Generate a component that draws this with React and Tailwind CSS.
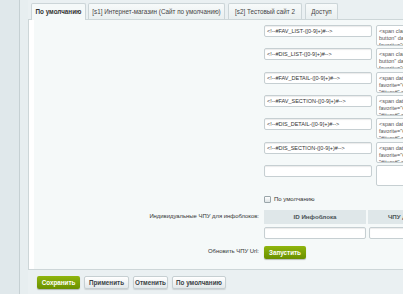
const font = "font-['Liberation_Sans',Arial,sans-serif]";

function Field({ value, wide }) {
  return (
    <div
      className={`h-[12px] ${wide ? "w-[102px]" : "w-[108px]"} shrink-0 bg-white border border-[#c6cfd2] rounded-[2px] shadow-[inset_0_1px_1px_rgba(0,0,0,0.08)] px-[2px] text-[5.5px] leading-[10px] text-[#333] whitespace-nowrap overflow-hidden`}
    >
      {value}
    </div>
  );
}

function Area({ lines }) {
  return (
    <div className="h-[21px] w-[60px] shrink-0 bg-white border border-[#c6cfd2] rounded-[2px] px-[2px] pt-[2px] text-[5.5px] leading-[7px] text-[#555] whitespace-nowrap overflow-hidden">
      {lines.map((l, i) => (
        <div key={i}>{l}</div>
      ))}
    </div>
  );
}

function Row({ label, children, className = "" }) {
  return (
    <div className={`flex items-start ${className}`}>
      <div className="w-[226px] shrink-0 text-right text-[5.9px] text-[#333] pr-[1px]">{label}</div>
      <div className="ml-[4px] flex items-start gap-[4px]">{children}</div>
    </div>
  );
}

function Btn({ children, green, w }) {
  return (
    <div
      className={`h-[13px] ${w} flex items-center justify-center rounded-[2px] text-[6.3px] font-bold ${
        green
          ? "bg-gradient-to-b from-[#8fb50e] to-[#6a9000] text-white shadow-[0_1px_1px_rgba(0,0,0,0.25)]"
          : "bg-gradient-to-b from-[#ffffff] to-[#e3e8ea] text-[#3a4245] border border-[#c6cfd2] shadow-[0_1px_1px_rgba(0,0,0,0.12)]"
      }`}
    >
      {children}
    </div>
  );
}

const spanA = ['<span class="bx-fav-', 'button" data-fav="', 'favorite="#ID#"'];
const spanB = ["<span data-fav-", 'favorite="#ID#"', '"#item#" class'];

const rows = [
  ["<!--#FAV_LIST-([0-9]+)#-->", spanA],
  ["<!--#DIS_LIST-([0-9]+)#-->", spanA],
  ["<!--#FAV_DETAIL-([0-9]+)#-->", spanB],
  ["<!--#FAV_SECTION-([0-9]+)#-->", spanB],
  ["<!--#DIS_DETAIL-([0-9]+)#-->", spanB],
  ["<!--#DIS_SECTION-([0-9]+)#-->", spanB],
  ["", []],
];

export default function App() {
  return (
    <div className={`flex w-[403px] h-[294px] overflow-hidden bg-[#eaf0f2] ${font}`}>
      <div className="w-[20px] shrink-0 bg-[#e0e8eb] border-r border-[#c6d0d3]" />
      <div className="w-[8px] shrink-0 bg-[#e7eef0]" />
      <div className="flex flex-col flex-1 min-w-0">
        {/* tabs */}
        <div className="h-[19px] pt-[3px] pl-[3px] flex items-stretch text-[6.3px] font-bold text-[#333] whitespace-nowrap">
          <div className="w-[55px] -mb-px relative z-10 bg-[#f5f9f9] border-x border-t border-[#ccd5d8] rounded-t-[2px] flex items-center justify-center">
            По умолчанию
          </div>
          <div className="ml-[2px] w-[137px] bg-gradient-to-b from-[#f7fafa] to-[#e9eff0] border-x border-t border-[#ccd5d8] rounded-t-[2px] flex items-center justify-center font-normal text-[#444]">
            [s1] Интернет-магазин (Сайт по умолчанию)
          </div>
          <div className="ml-[3px] w-[74px] bg-gradient-to-b from-[#f7fafa] to-[#e9eff0] border-x border-t border-[#ccd5d8] rounded-t-[2px] flex items-center justify-center font-normal text-[#444]">
            [s2] Тестовый сайт 2
          </div>
          <div className="ml-[3px] w-[33px] bg-gradient-to-b from-[#f7fafa] to-[#e9eff0] border-x border-t border-[#ccd5d8] rounded-t-[2px] flex items-center justify-center font-normal text-[#444]">
            Доступ
          </div>
        </div>

        {/* panel */}
        <div className="h-[251px] shrink-0 border-l border-t border-b border-[#cdd6d8] bg-white">
          <div className="h-full ml-[5px] bg-[#f5f9f9] pt-[5px]">
            <div className="flex flex-col gap-[2.33px]">
              {rows.map(([v, lines], i) => (
                <Row key={i} label="">
                  <div className="h-[21px]">
                    <div className={i === 6 ? "h-[13px]" : ""}>
                      <Field value={v} />
                    </div>
                  </div>
                  <Area lines={lines} />
                </Row>
              ))}
            </div>

            <Row label="" className="mt-[9px]">
              <div className="flex items-center gap-[3px] text-[6px] text-[#333]">
                <div className="w-[7px] h-[7px] border border-[#9aa6aa] rounded-[1px] bg-gradient-to-b from-white to-[#dde3e5]" />
                <span>По умолчанию</span>
              </div>
            </Row>

            <Row label={<span className="block pt-[2px]">Индивидуальные ЧПУ для инфоблоков:</span>} className="mt-[6px]">
              <div className="flex flex-col gap-[3px]">
                <div className="flex gap-[2px]">
                  <div className="w-[102px] h-[14px] bg-[#dfe7e9] flex items-center justify-center text-[6.2px] font-bold text-[#4a5356]">
                    ID Инфоблока
                  </div>
                  <div className="w-[102px] h-[14px] bg-[#dfe7e9] flex items-center justify-center text-[6.2px] font-bold text-[#4a5356]">
                    ЧПУ для инфоблока
                  </div>
                </div>
                <div className="flex gap-[3px]">
                  <Field value="" wide />
                  <Field value="" wide />
                </div>
              </div>
            </Row>

            <Row label={<span className="block pt-[1px]">Обновить ЧПУ Url:</span>} className="mt-[7px]">
              <Btn green w="w-[42px]">Запустить</Btn>
            </Row>
          </div>
        </div>

        {/* footer buttons */}
        <div className="flex gap-[4px] pl-[9px] pt-[6px]">
          <Btn green w="w-[43px]">Сохранить</Btn>
          <Btn w="w-[45px]">Применить</Btn>
          <Btn w="w-[35px]">Отменить</Btn>
          <Btn w="w-[54px]">По умолчанию</Btn>
        </div>
      </div>
    </div>
  );
}
